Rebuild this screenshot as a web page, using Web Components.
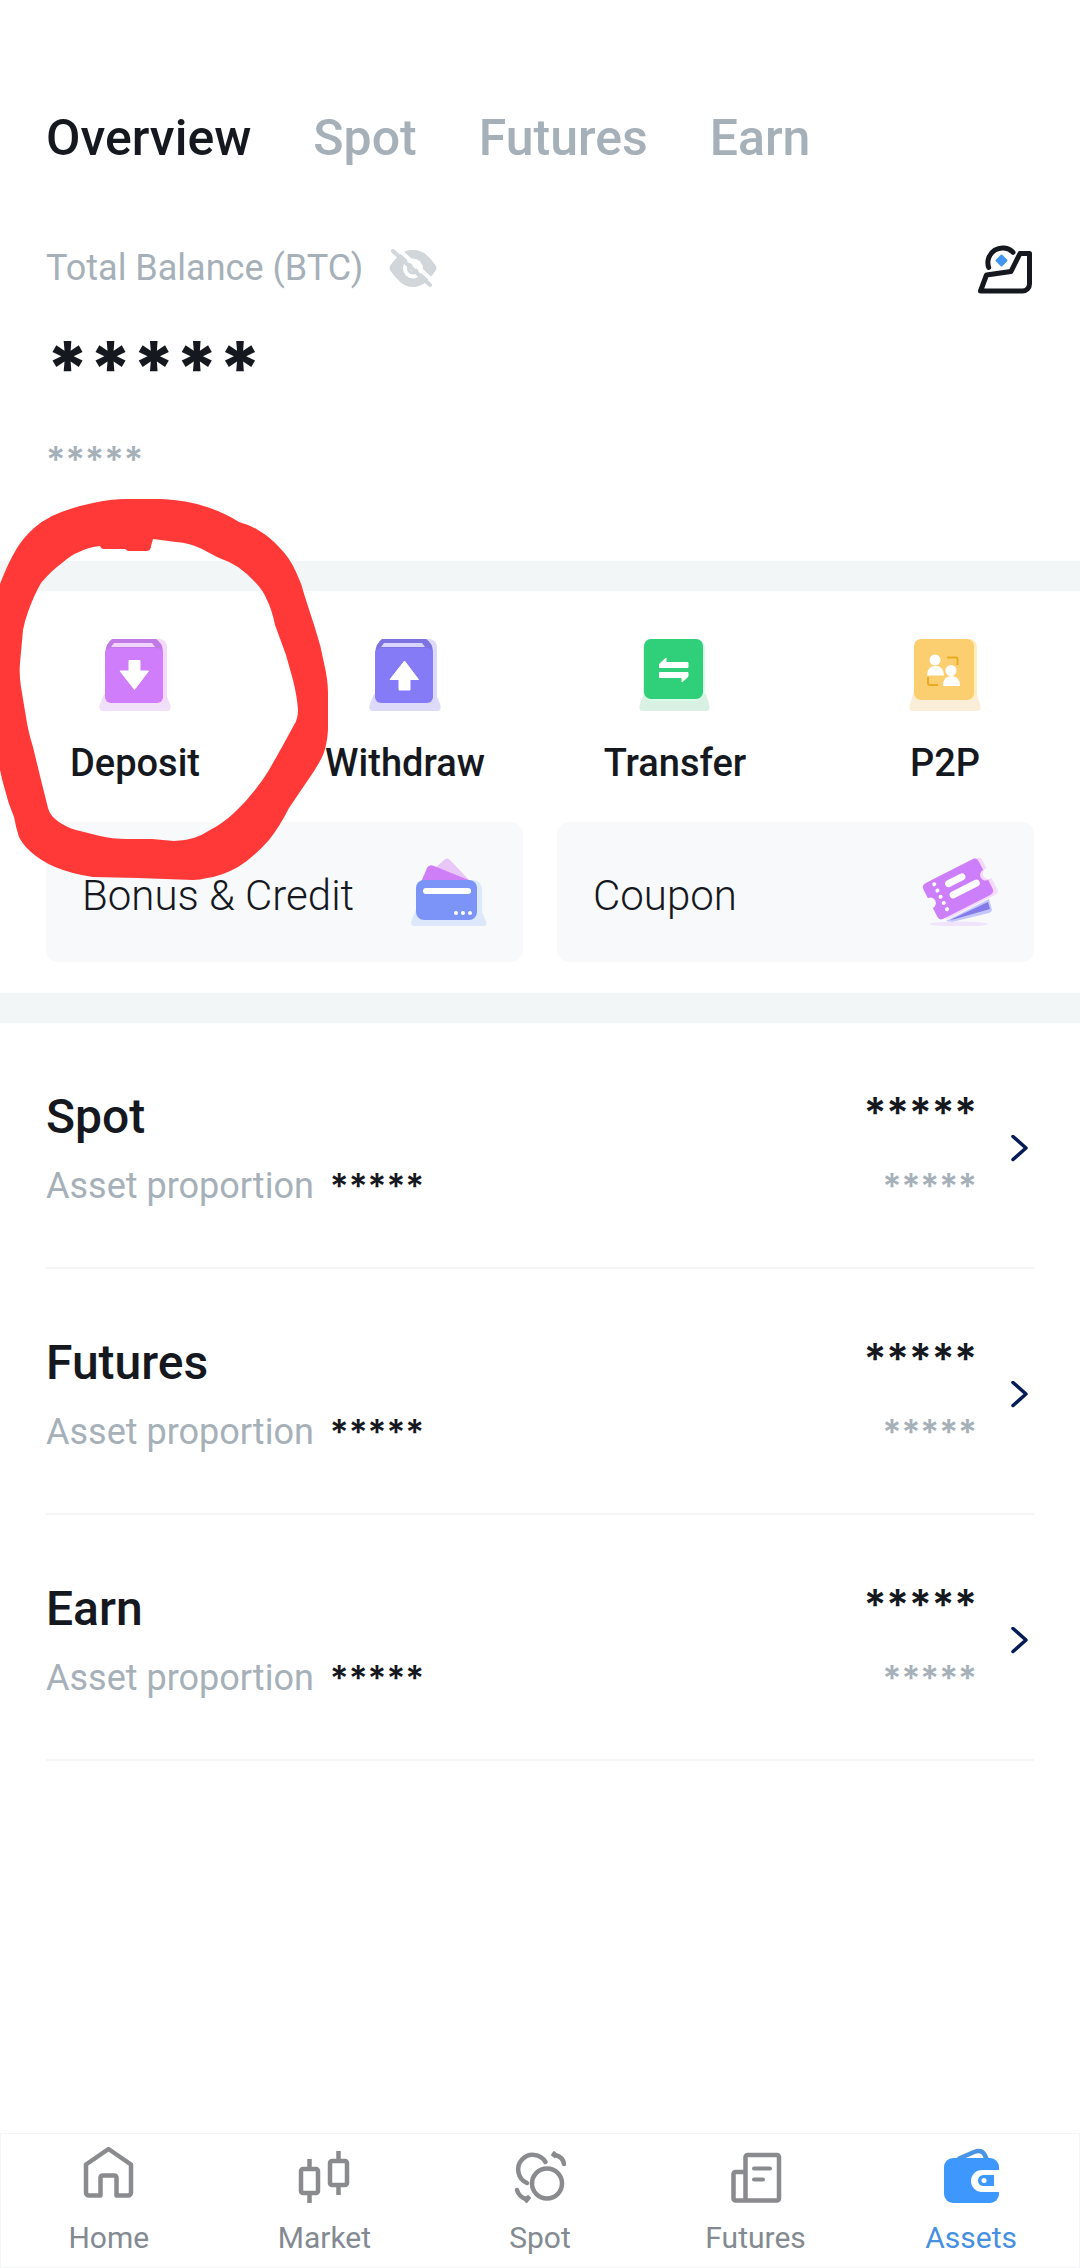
<!DOCTYPE html>
<html lang="en">
<head>
<meta charset="utf-8">
<meta name="viewport" content="width=device-width, initial-scale=1">
<title>Assets overview</title>
<style>
  :root {
    --ink: #15181e;
    --muted: #a6b0b9;
    --band: #f3f6f7;
    --card: #f8f9fb;
    --line: #f4f5f6;
    --stars: Inter, "DejaVu Sans", sans-serif;
  }
  body { margin: 0; background: #fff; color: var(--ink); font-family: Roboto, "Liberation Sans", sans-serif; }
</style>
</head>
<body>
<assets-app></assets-app>

<script>
const RESET = `
  *, *::before, *::after { box-sizing: border-box; }
  button { font: inherit; color: inherit; background: none; border: 0; padding: 0; margin: 0; cursor: pointer; }
  a { color: inherit; text-decoration: none; }
  svg { display: block; flex: none; }
`;

const define = (name, html) => customElements.define(name, class extends HTMLElement {
  constructor() {
    super();
    const root = this.attachShadow({ mode: 'open' });
    root.innerHTML = html;
  }
});

const defineLazy = (name, render) => customElements.define(name, class extends HTMLElement {
  constructor() { super(); this.attachShadow({ mode: 'open' }); }
  connectedCallback() { this.shadowRoot.innerHTML = render(this); }
});

const ICONS = {
  eye: `<svg width="48" height="38" viewBox="0 0 48 38">
    <path fill="#d0d6da" d="M24 1C33 1 38 5 46 15.500Q49 19 46 22.500C38 33 33 38 24 38S10 33 2 22.500Q-1 19 2 15.500C10 5 15 1 24 1Z"/>
    <circle cx="24" cy="19.500" r="10" fill="#fff"/><circle cx="24" cy="19.500" r="6" fill="#d0d6da"/><circle cx="24" cy="19.500" r="3" fill="#fff"/>
    <path d="M6-3L46 34" stroke="#fff" stroke-width="4"/>
    <path d="M4 2L41 36" stroke="#d0d6da" stroke-width="4" stroke-linecap="round"/></svg>`,
  record: `<svg width="56" height="54" viewBox="0 0 56 54" fill="none" stroke="#15181e" stroke-width="5" stroke-linejoin="round" stroke-linecap="round">
    <path d="M4.500 50L10.500 34L35 30.500L44 12.500H53.500V43a7 7 0 0 1-7 7Z"/>
    <path d="M12.700 26.500A14.700 14.700 0 0 1 37 11.300"/>
    <path d="M25.500 14.500L30.500 19.500L25.500 24.500L20.500 19.500Z" fill="#4196f0" stroke="#4196f0" stroke-width="2"/></svg>`,
  deposit: `<svg width="72" height="72" viewBox="0 0 72 72">
    <path fill="#f1dff9" d="M5 55H67L71 65Q73 72 68 72H4Q-1 72 1 65Z"/><rect x="14" y="0" width="54" height="64" rx="8" fill="#f5d9fd"/>
    <path fill="#c07ae6" d="M13 0H57Q64 4 64 14H6Q7 4 13 0Z"/><rect x="6" y="9" width="58" height="55" rx="6" fill="#cf7dfb"/>
    <path fill="#f1d3fd" d="M15 4H53L56 8H12Z"/><path fill="#fff" stroke="#fff" stroke-linejoin="round" d="M30 21.500H41V32H49.500L35.500 50.500L21 32H30Z"/></svg>`,
  withdraw: `<svg width="72" height="72" viewBox="0 0 72 72">
    <path fill="#dcd9f9" d="M5 55H67L71 65Q73 72 68 72H4Q-1 72 1 65Z"/><rect x="14" y="0" width="54" height="64" rx="8" fill="#dcd9fd"/>
    <path fill="#7c72e0" d="M13 0H57Q64 4 64 14H6Q7 4 13 0Z"/><rect x="6" y="9" width="58" height="55" rx="6" fill="#867bf7"/>
    <path fill="#d8d4fd" d="M15 4H53L56 8H12Z"/><path fill="#fff" stroke="#fff" stroke-linejoin="round" d="M30 51H41V40.500H49.500L35.500 22L21 40.500H30Z"/></svg>`,
  transfer: `<svg width="72" height="72" viewBox="0 0 72 72">
    <path fill="#d8f1e2" d="M5 55H67L70 65Q72 72 67 72H4Q-1 72 1 65Z"/><rect x="4" y="0" width="62" height="62" rx="9" fill="#d6fbe6"/>
    <rect x="5" y="0" width="59" height="60" rx="7" fill="#30cf79"/>
    <path fill="#fff" stroke="#fff" stroke-linejoin="round" d="M20.500 28.500V25L27 19V23.500H49V28.500ZM49 33.500V37.500L43 43V38.500H20.500V33.500Z"/></svg>`,
  p2p: `<svg width="72" height="72" viewBox="0 0 72 72">
    <path fill="#fbeed8" d="M5 52H67L71 65Q73 72 68 72H4Q-1 72 1 65Z"/><rect x="10" y="0" width="58" height="61" rx="8" fill="#ffedbd"/>
    <rect x="5" y="0" width="60" height="61" rx="7" fill="#fbce70"/>
    <path d="M38 18.500H47Q48.500 18.500 48.500 20V26M19 38V44Q19 46 21 46H29" fill="none" stroke="#e9ab22" stroke-width="2"/>
    <g fill="#fff"><circle cx="26" cy="21" r="5.500"/><path d="M18 36.500Q18 27 26.500 27T35 36.500Z"/>
    <circle cx="42" cy="31.500" r="5.500"/><path d="M34 47Q34 37 42.500 37T51 47Z"/></g></svg>`,
  bonus: `<svg width="76" height="68" viewBox="0 0 76 68">
    <path fill="#dce7fa" d="M5 52H70L74 61Q78 68 71 68H4Q-2 68 1 61Z"/><rect x="12" y="22" width="59" height="42" rx="9" fill="#dce9fd"/>
    <path fill="#e8c6f8" d="M24 10L33 2Q36-1 39 2L60 24H24Z"/><path fill="#ce7ff8" d="M10 24L16 10Q18 6 23 8L60 23Z"/>
    <rect x="5" y="22" width="61" height="40" rx="8" fill="#7c94f8"/><rect x="12" y="30" width="48" height="6" rx="3" fill="#fff"/>
    <g fill="#fff"><circle cx="45" cy="55" r="2"/><circle cx="52" cy="55" r="2"/><circle cx="59" cy="55" r="2"/></g></svg>`,
  coupon: `<svg width="76" height="68" viewBox="0 0 76 68">
    <ellipse cx="37" cy="66" rx="29" ry="2.500" fill="#f0e3fc"/>
    <path fill="#c5c6fb" d="M24 63L67 41L70 52Q70 54 67 55L30 64Z"/><path fill="#827be8" d="M28 62L66 44L68 51L33 61Z"/>
    <g transform="translate(36 31) rotate(-27)">
      <path fill="#f3d9fd" d="M-20-20H29Q35-20 35-14V18Q35 22 30 22H-24Z"/>
      <path fill="#cd7efb" d="M-26-20H26Q31-20 31-15V-5.500A5.500 5.500 0 0 0 31 5.500V15Q31 20 26 20H-26Q-31 20-31 15V5.500A5.500 5.500 0 0 0-31-5.500V-15Q-31-20-26-20Z"/>
      <circle cx="34" cy="0" r="5.500" fill="#f8f9fb"/>
      <g fill="#fff"><circle cx="-19" cy="-15" r="2"/><circle cx="-19" cy="-8" r="2"/><circle cx="-19" cy="-1" r="2"/><circle cx="-19" cy="6" r="2"/><circle cx="-19" cy="13" r="2"/></g>
      <path d="M-6-9H9M-7 3H19" stroke="#fff" stroke-width="7" stroke-linecap="round"/></g></svg>`,
  chevron: `<svg width="18" height="28" viewBox="0 0 18 28" fill="none" stroke="#061c56" stroke-width="3.500" stroke-linecap="round" stroke-linejoin="round"><path d="M2 1.500L15 13L2 24.500"/></svg>`,
  home: `<svg width="60" height="58" viewBox="0 0 60 58" fill="none" stroke="#8a8b8e" stroke-width="4.500" stroke-linejoin="round">
    <path d="M10 49.500H21.500V31.500a2 2 0 0 1 2-2H35.500a2 2 0 0 1 2 2V49.500H49a3 3 0 0 0 3-3V18.500L29.500 3L7 18.500V46.500a3 3 0 0 0 3 3Z"/></svg>`,
  market: `<svg width="60" height="58" viewBox="0 0 60 58" fill="none" stroke="#8a8b8e" stroke-width="4.500">
    <rect x="7" y="23" width="17" height="24" rx="2"/><rect x="36" y="15" width="17" height="24" rx="2"/><path d="M15.500 13V22M15.500 48V57M44.500 5V14M44.500 40V49"/></svg>`,
  spot: `<svg width="60" height="58" viewBox="0 0 60 58" fill="none" stroke="#8a8b8e" stroke-width="4.500" stroke-linecap="round">
    <circle cx="37" cy="37.500" r="15"/><path d="M17 37A14.700 14.700 0 1 1 35.500 16M7 44Q9 51 16 53M54 18Q53 11 45 9"/>
    <path fill="#8a8b8e" stroke-width="2" stroke-linejoin="round" d="M18 50L20 52L16.500 56L14 53ZM42 9L44 6L46 8L44.500 11Z"/></svg>`,
  futures: `<svg width="60" height="58" viewBox="0 0 60 58" fill="none" stroke="#8a8b8e" stroke-width="4.500" stroke-linecap="round">
    <path d="M19.500 54.500V11a2 2 0 0 1 2-2H51a2 2 0 0 1 2 2V52.500a2 2 0 0 1-2 2H9.500a2 2 0 0 1-2-2V28a2 2 0 0 1 2-2H19"/><path stroke-width="4" d="M28 22.500H44M28 33.500H37"/></svg>`,
  assets: `<svg width="60" height="58" viewBox="0 0 60 58">
    <path d="M17 13L33 6Q41 3 44 9.500L46 14" fill="none" stroke="#4a94e6" stroke-width="4.500"/>
    <rect x="3" y="12" width="55" height="45" rx="9" fill="#3d97fd"/>
    <path d="M59 24H41a11 11 0 0 0 0 22H59Z" fill="#fff"/><path d="M53 29H42.500a5.500 5.500 0 0 0 0 11H53Z" fill="#3d97fd"/><circle cx="43" cy="34.500" r="2.500" fill="#fff"/></svg>`
};

define('tab-strip', `<style>${RESET}
  :host { display: block; }
  nav { display: flex; gap: 62px; font-size: 50px; line-height: 60px; font-weight: 500; color: var(--muted); }
  button[aria-selected="true"] { color: var(--ink); }
  </style>
  <nav role="tablist">
    <button role="tab" aria-selected="true">Overview</button><button role="tab" aria-selected="false">Spot</button><button role="tab" aria-selected="false">Futures</button><button role="tab" aria-selected="false">Earn</button>
  </nav>`);

define('balance-summary', `<style>${RESET}
  :host { display: flex; flex-direction: column; }
  .head { display: flex; align-items: center; height: 50px; font-size: 36px; line-height: 50px; color: var(--muted); }
  .eye { margin-left: 26px; }
  .record { margin-left: auto; padding-right: 2px; }
  .total, .fiat { font-family: var(--stars); }
  .total { margin-top: 35px; font-size: 74px; line-height: 80px; font-weight: 800; }
  .fiat { margin-top: 27px; font-size: 36px; line-height: 48px; font-weight: 600; color: var(--muted); }
  </style>
  <div class="head"><span>Total Balance (BTC)</span>
    <button class="eye" aria-label="Show balance">${ICONS.eye}</button>
    <button class="record" aria-label="Records">${ICONS.record}</button></div>
  <div class="total">*****</div><div class="fiat">*****</div>`);

defineLazy('action-button', el => `<style>${RESET}
  :host { display: flex; flex: 1 1 0; justify-content: center; }
  button { display: flex; flex-direction: column; align-items: center; gap: 28px; font-size: 38px; line-height: 48px; font-weight: 500; }
  </style><button>${ICONS[el.getAttribute('icon')]}<slot></slot></button>`);

defineLazy('promo-card', el => `<style>${RESET}
  :host { display: block; flex: 1 1 0; }
  button { display: flex; justify-content: space-between; align-items: flex-end; width: 100%; padding: 36px;
    border-radius: 12px; background: var(--card); font-size: 42px; line-height: 60px; font-weight: 300; text-align: left; }
  </style><button><span><slot></slot></span>${ICONS[el.getAttribute('icon')]}</button>`);

define('hand-circle', `<style>
  :host { display: block; position: absolute; left: 0; top: -101px; pointer-events: none; }
  svg { display: block; }
  </style>
  <svg width="340" height="400" viewBox="0 490 340 400" aria-hidden="true"><path fill="#ff3838" fill-rule="evenodd" d="
  M0 584Q8 563 17 548Q24 537 34 528Q42 521 52 516Q72 507 93 503Q110 499 127 499H162Q186 500 207 507Q225 513 239 522Q250 525 258 530Q270 537 279 547Q290 558 296 572Q302 584 305 597L315 628Q321 646 324 663Q328 680 328 693V730Q327 745 323 755Q318 766 308 780L289 808Q280 826 269 840Q254 857 238 867Q222 876 207 878Q200 880 193 880L138 878L93 877Q72 874 55 867Q41 861 31 852Q23 845 19 837Q16 828 14 817Q8 803 5 790Q2 780 0 770Z
  M100 546Q101 549 104 549H125L128 551H146Q151 551 151 546L153 539L176 542Q190 543 202 549L217 557Q228 561 238 567Q248 574 255 582Q263 590 267 600Q272 610 275 625L286 655L293 680Q297 696 298 710Q298 719 294 725L282 747L269 770Q263 780 255 790Q245 803 234 813Q222 824 210 830Q194 841 174 841L152 839H127Q112 839 100 836Q88 833 76 830Q66 827 59 822Q50 816 48 808L41 780L33 747Q28 731 26 717L21 687Q19 674 20 663L23 630Q25 620 28 612Q34 595 41 583Q51 571 62 563Q71 555 79 552Q89 547 100 546Z"/></svg>`);

define('quick-actions', `<style>${RESET}
  :host { display: block; position: relative; padding: 48px 0 31px; }
  .actions { display: flex; }
  .cards { display: flex; gap: 34px; margin-top: 35px; padding: 0 46px; }
  </style>
  <div class="actions">
    <action-button icon="deposit">Deposit</action-button><action-button icon="withdraw">Withdraw</action-button>
    <action-button icon="transfer">Transfer</action-button><action-button icon="p2p">P2P</action-button>
  </div>
  <div class="cards"><promo-card icon="bonus">Bonus &amp; Credit</promo-card><promo-card icon="coupon">Coupon</promo-card></div>
  <hand-circle></hand-circle>`);

define('account-row', `<style>${RESET}
  :host { display: block; border-bottom: 2px solid var(--line); }
  a { display: flex; align-items: center; padding: 64px 5px 57px 0; }
  .col { display: flex; flex-direction: column; gap: 15px; }
  .name { font-size: 48px; line-height: 60px; font-weight: 500; }
  .sub { display: flex; gap: 16px; font-size: 36px; line-height: 48px; color: var(--muted); }
  .stars { font-family: var(--stars); font-size: 35px; line-height: 48px; font-weight: 600; }
  .sub .stars { color: var(--ink); }
  .right { gap: 23px; margin-left: auto; margin-right: 34px; align-items: flex-end; }
  .amount { font-family: var(--stars); font-size: 42px; line-height: 52px; font-weight: 600; }
  .right .stars { color: var(--muted); }
  </style>
  <a href="#"><span class="col"><span class="name"><slot></slot></span>
    <span class="sub"><span>Asset proportion</span><span class="stars">*****</span></span></span>
    <span class="col right"><span class="amount">*****</span><span class="stars">*****</span></span>${ICONS.chevron}</a>`);

defineLazy('nav-item', el => `<style>${RESET}
  :host { display: flex; flex: 1 1 0; justify-content: center; color: #848a91; }
  :host([active]) { color: #4790df; }
  a { display: flex; flex-direction: column; align-items: center; gap: 16px; font-size: 30px; line-height: 36px; }
  </style><a href="#">${ICONS[el.getAttribute('icon')]}<span><slot></slot></span></a>`);

define('bottom-nav', `<style>${RESET}
  :host { display: block; margin-top: auto; }
  nav { display: flex; padding: 12px 0 11px; border: 1px solid #f4f5f6; }
  </style>
  <nav><nav-item icon="home">Home</nav-item><nav-item icon="market">Market</nav-item><nav-item icon="spot">Spot</nav-item><nav-item icon="futures">Futures</nav-item><nav-item icon="assets" active>Assets</nav-item></nav>`);

define('assets-app', `<style>${RESET}
  :host { display: flex; flex-direction: column; min-height: 100vh; }
  header { padding: 108px 46px 78px; display: flex; flex-direction: column; gap: 75px; }
  .band { height: 30px; background: var(--band); }
  .list { padding: 0 46px; }
  </style>
  <header><tab-strip></tab-strip><balance-summary></balance-summary></header>
  <div class="band"></div>
  <quick-actions></quick-actions>
  <div class="band"></div>
  <div class="list"><account-row>Spot</account-row><account-row>Futures</account-row><account-row>Earn</account-row></div>
  <bottom-nav></bottom-nav>`);
</script>
</body>
</html>
